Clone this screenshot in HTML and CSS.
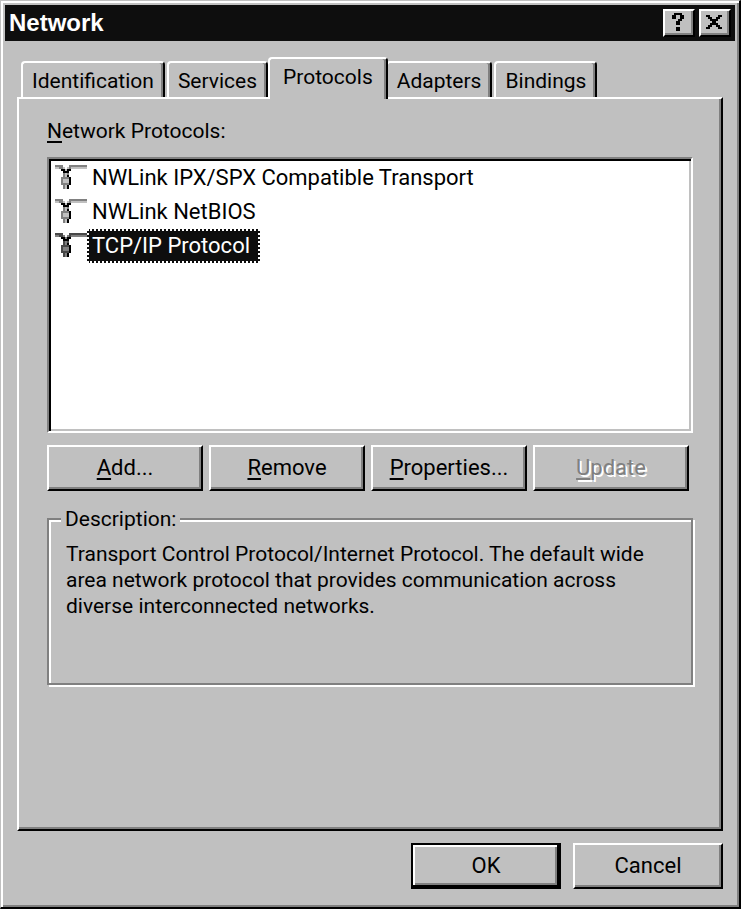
FILE: index.html
```
<!DOCTYPE html>
<html lang="en">
  <head>
    <meta charset="UTF-8" />
    <meta name="viewport" content="width=device-width, initial-scale=1.0" />
    <title>Network</title>
    <link rel="stylesheet" href="styles.css">
  </head>
  <body>
    <!-- protocol icon, one unit is one old pixel -->
    <svg class="sprite" aria-hidden="true">
      <symbol id="protocol" viewBox="0 0 16 12" shape-rendering="crispEdges">
        <path class="dark" d="M0 0h3v1h-3zM8 0h8v1h-8zM2 1h2v1h-2zM7 1h1v1h-1zM3 0h1v1h-1zM7 0h1v1h-1zM4 3h1v3h-1zM6 4h1v2h-1zM3 6h1v4h-1zM4 6h3v1h-3zM4 9h3v1h-3zM4 10h1v2h-1z"/>
        <path class="light" d="M0 1h2v1h-2zM8 1h8v1h-8zM4 1h1v1h-1zM6 1h1v1h-1zM5 2h1v1h-1zM5 4h1v2h-1zM4 7h3v2h-3zM5 10h1v2h-1z"/>
        <path class="black" d="M3 2h1v1h-1zM4 2h1v1h-1zM6 2h1v1h-1zM7 2h1v1h-1zM4 3h3v1h-3zM6 5h1v1h-1zM7 6h1v4h-1zM6 10h1v2h-1z"/>
      </symbol>
    </svg>
    <main class="window">
      <header class="titlebar">
        <h1>Network</h1>
        <button class="titleknap" aria-label="Help">
          <svg viewBox="0 0 12 18" width="12" height="18" shape-rendering="crispEdges"><path d="M2 0h8v2h-8zM0 2h4v4h-4zM8 2h4v4h-4zM6 6h4v2h-4zM4 8h4v4h-4zM4 14h4v4h-4z"/></svg>
        </button>
        <button class="titleknap" aria-label="Close">
          <svg viewBox="0 0 16 14" width="16" height="14" shape-rendering="crispEdges"><path d="M0 0h4v2h-4zM12 0h4v2h-4zM2 2h4v2h-4zM10 2h4v2h-4zM4 4h8v2h-8zM6 6h4v2h-4zM4 8h8v2h-8zM2 10h4v2h-4zM10 10h4v2h-4zM0 12h4v2h-4zM12 12h4v2h-4z"/></svg>
        </button>
      </header>

      <nav class="tabs" role="tablist">
        <button role="tab">Identification</button>
        <button role="tab">Services</button>
        <button role="tab" class="valgt" aria-selected="true">Protocols</button>
        <button role="tab">Adapters</button>
        <button role="tab">Bindings</button>
      </nav>

      <section class="panel" role="tabpanel">
        <h2 id="listlabel"><u>N</u>etwork Protocols:</h2>
        <ul class="list" role="listbox" aria-labelledby="listlabel">
          <li role="option"><svg class="icon"><use href="#protocol"/></svg><span>NWLink IPX/SPX Compatible Transport</span></li>
          <li role="option"><svg class="icon"><use href="#protocol"/></svg><span>NWLink NetBIOS</span></li>
          <li role="option" class="valgt" aria-selected="true"><svg class="icon"><use href="#protocol"/></svg><span>TCP/IP Protocol</span></li>
        </ul>
        <div class="buttons">
          <button class="btn"><u>A</u>dd...</button>
          <button class="btn"><u>R</u>emove</button>
          <button class="btn"><u>P</u>roperties...</button>
          <button class="btn" disabled><u>U</u>pdate</button>
        </div>
        <fieldset>
          <legend>Description:</legend>
          <p>Transport Control Protocol/Internet Protocol. The default wide area network protocol that provides communication across diverse interconnected networks.</p>
        </fieldset>
      </section>

      <footer>
        <button class="btn default">OK</button>
        <button class="btn">Cancel</button>
      </footer>
    </main>
  </body>
</html>
```
FILE: styles.css
```
* {
  box-sizing: border-box;
  margin: 0;
  padding: 0;
}

body,
button {
  font-family: Roboto, "Liberation Sans", sans-serif;
  font-size: 21px;
  line-height: 26px;
  color: #000;
}

button {
  background-color: #c0c0c0;
}

u {
  text-decoration-thickness: 2px;
  text-underline-offset: 3px;
}

.sprite {
  position: absolute;
  width: 0;
  height: 0;
}

/* window */
.window {
  display: flex;
  flex-direction: column;
  min-height: 100vh;
  padding: 2px;
  background-color: #c0c0c0;
  border: 2px solid #000;
  border-top: 1px solid #c0c0c0;
  border-left: 1px solid #c0c0c0;
  box-shadow: inset 2px 2px 0 #fff, inset -2px -2px 0 #808080;
}

.titlebar {
  display: flex;
  align-items: center;
  gap: 4px;
  height: 36px;
  margin: 2px 2px 0;
  padding: 0 4px;
  background-color: #0e0e0e;
}

.titlebar h1 {
  flex: 1;
  font-family: "Liberation Sans", sans-serif;
  font-size: 24px;
  color: #fff;
}

.titleknap {
  display: grid;
  place-content: center;
  width: 32px;
  height: 28px;
  padding: 0 2px 2px 0;
  border: 2px solid;
  border-color: #fff #000 #000 #fff;
  box-shadow: inset -2px -2px 0 #808080;
}

/* tabs */
.tabs {
  display: flex;
  align-items: flex-end;
  gap: 2px;
  margin: 16px 18px 0;
}

.tabs button {
  height: 36px;
  padding: 2px 9px 0;
  border: 2px solid;
  border-color: #fff #000 #fff #fff;
  border-bottom: 0;
  border-radius: 4px 4px 0 0;
  box-shadow: inset -2px 0 0 #808080;
}

.tabs .valgt {
  z-index: 1;
  height: 42px;
  margin: 0 -4px -2px -2px;
  padding: 0 13px 4px;
}

.panel {
  flex: 1;
  margin: 0 14px;
  padding: 19px 28px 26px;
  border: 2px solid;
  border-color: #fff #000 #000 #fff;
  box-shadow: inset -2px -2px 0 #808080;
}

h2 {
  margin-bottom: 13px;
  font-size: 21px;
  font-weight: normal;
}

/* list */
.list {
  min-height: 276px;
  padding: 2px 4px;
  background-color: #fff;
  list-style: none;
  font-size: 22px;
  border: 2px solid;
  border-color: #808080 #fff #fff #808080;
  box-shadow: inset 2px 2px 0 #000, inset -2px -2px 0 #c0c0c0;
}

.list li {
  display: flex;
  height: 34px;
  padding-left: 2px;
}

.list span {
  padding: 2px 8px 2px 3px;
  border: 2px solid transparent;
}

.list .valgt span {
  background-color: #0e0e0e;
  border: 2px dotted #fff;
  color: #fff;
}

.icon {
  --dark: #808080;
  --light: #c0c0c0;
  width: 32px;
  height: 24px;
  margin-top: 4px;
}

.valgt .icon {
  --dark: #484848;
  --light: #808080;
}

.dark { fill: var(--dark); }
.light { fill: var(--light); }
.black { fill: #000; }

/* buttons */
.buttons {
  display: flex;
  gap: 6px;
  margin: 12px 4px 15px 0;
}

.buttons .btn {
  flex: 1;
}

.btn {
  height: 46px;
  font-size: 22px;
  border: 2px solid;
  border-color: #fff #000 #000 #fff;
  box-shadow: inset -2px -2px 0 #808080;
}

.btn:disabled {
  color: #808080;
  text-shadow: 2px 2px 0 #fff;
}

.default {
  border-color: #000;
  box-shadow: inset -2px -2px 0 #000, inset 2px 2px 0 #fff, inset -4px -4px 0 #808080;
}

/* description */
fieldset {
  min-height: 179px;
  padding: 9px 17px;
  border: 2px solid #808080;
  box-shadow: 2px 2px 0 #fff, inset 2px 2px 0 #fff;
}

legend {
  margin-left: -5px;
  padding: 0 4px;
  background-color: #c0c0c0;
}

footer {
  display: flex;
  justify-content: flex-end;
  gap: 12px;
  margin: 12px 14px 16px;
}

footer .btn {
  width: 150px;
}
```
